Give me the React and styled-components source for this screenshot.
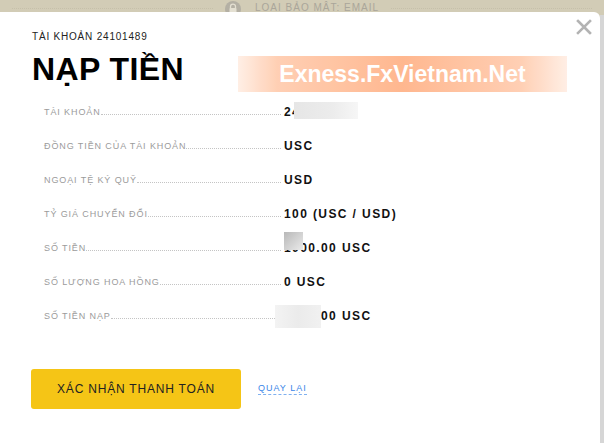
import styled, { createGlobalStyle } from "styled-components";

const GlobalStyle = createGlobalStyle`
  html, body {
    margin: 0;
    padding: 0;
    background: #d2ccb6;
    overflow: hidden;
    font-family: "Liberation Sans", Arial, sans-serif;
  }
`;

const rows = [
  { label: "Tài khoản", value: "24101489", redact: { left: 10, top: -3, width: 64, height: 17, tone: "light" } },
  { label: "Đồng tiền của tài khoản", value: "USC" },
  { label: "Ngoại tệ ký quỹ", value: "USD" },
  { label: "Tỷ giá chuyển đổi", value: "100 (USC / USD)" },
  { label: "Số tiền", value: "1000.00 USC", redact: { left: 0, top: -9, width: 19, height: 18, tone: "dark" } },
  { label: "Số lượng hoa hồng", value: "0 USC" },
  { label: "Số tiền nạp", value: "1000.00 USC", redact: { left: -9, top: -4, width: 46, height: 23, tone: "pale" } },
];

export default function App() {
  return (
    <>
      <GlobalStyle />
      <Page>
        <TopBar>
          <BarLeader />
          <LockIcon viewBox="0 0 16 16">
            <circle cx="8" cy="8" r="8" fill="#b4b0a4" />
            <path d="M5.5 7V5.6a2.5 2.5 0 0 1 5 0V7" fill="none" stroke="#e4e0d2" strokeWidth="1.3" />
            <rect x="4.5" y="7" width="7" height="5" rx="0.8" fill="#e4e0d2" />
          </LockIcon>
          <BarText>LOẠI BẢO MẬT: EMAIL</BarText>
          <BarLeader />
        </TopBar>
        <Body>
          <Modal>
            <CloseButton viewBox="0 0 16 16">
              <path d="M2 2L14 14M14 2L2 14" stroke="#b3b3b3" strokeWidth="2.6" strokeLinecap="square" />
            </CloseButton>
            <Watermark>Exness.FxVietnam.Net</Watermark>
            <Account>Tài khoản 24101489</Account>
            <Title>NẠP TIỀN</Title>
            <Details>
              {rows.map((r, i) => (
                <Row key={i}>
                  <LabelCell>
                    <Label>{r.label}</Label>
                    <Leader />
                  </LabelCell>
                  <Value>
                    {r.value}
                    {r.redact && (
                      <Redact
                        $left={r.redact.left}
                        $top={r.redact.top}
                        $width={r.redact.width}
                        $height={r.redact.height}
                        $tone={r.redact.tone}
                      />
                    )}
                  </Value>
                </Row>
              ))}
            </Details>
            <Actions>
              <ConfirmButton>Xác nhận thanh toán</ConfirmButton>
              <BackLink>Quay lại</BackLink>
            </Actions>
          </Modal>
          <Side />
        </Body>
      </Page>
    </>
  );
}

const Page = styled.div`
  display: flex;
  flex-direction: column;
  height: 100vh;
`;

const TopBar = styled.div`
  height: 12px;
  overflow: hidden;
  display: flex;
  align-items: flex-start;
  padding: 1px 0 0;
  box-sizing: border-box;
  gap: 0;
`;

const BarLeader = styled.span`
  flex: 1;
  height: 7px;
  border-bottom: 1px dotted #c6c0aa;
  margin: 0 12px;
`;

const LockIcon = styled.svg`
  width: 16px;
  height: 16px;
  flex: none;
`;

const BarText = styled.span`
  margin-left: 14px;
  font-size: 10px;
  line-height: 14px;
  letter-spacing: 1px;
  color: #aaa69a;
  white-space: nowrap;
`;

const Body = styled.div`
  flex: 1;
  display: flex;
`;

const Modal = styled.div`
  position: relative;
  width: 600px;
  box-sizing: border-box;
  background: #ffffff;
  border-top-right-radius: 6px;
  padding: 19px 0 0 32px;
`;

const Side = styled.div`
  flex: 1;
  background: #d6d6d6;
  margin-top: 3px;
`;

const CloseButton = styled.svg`
  position: absolute;
  top: 7px;
  right: 8px;
  width: 16px;
  height: 16px;
`;

const Watermark = styled.div`
  position: absolute;
  left: 238px;
  top: 44px;
  width: 329px;
  height: 36px;
  display: flex;
  align-items: center;
  justify-content: center;
  background: linear-gradient(
    90deg,
    #ffeee4 0%,
    #ffcdb0 12%,
    #ffb48a 50%,
    #ffcdb0 86%,
    #ffeee4 100%
  );
  color: #ffffff;
  font-size: 23px;
  font-weight: 700;
  opacity: 0.95;
`;

const Account = styled.div`
  font-size: 10px;
  line-height: 12px;
  letter-spacing: 0.8px;
  text-transform: uppercase;
  color: #222;
`;

const Title = styled.h1`
  margin: 10px 0 0;
  font-size: 32px;
  line-height: 32px;
  font-weight: 700;
  letter-spacing: 0.4px;
  color: #000;
`;

const Details = styled.div`
  margin: 10px 0 0 12px;
  display: flex;
  flex-direction: column;
`;

const Row = styled.div`
  height: 34px;
  display: flex;
  align-items: center;
`;

const LabelCell = styled.div`
  width: 237px;
  margin-right: 3px;
  display: flex;
  align-items: baseline;
`;

const Label = styled.span`
  font-size: 9px;
  line-height: 12px;
  letter-spacing: 0.9px;
  text-transform: uppercase;
  color: #9b9b9b;
  white-space: nowrap;
`;

const Leader = styled.span`
  flex: 1;
  height: 0;
  border-bottom: 1px dotted #c4c4c4;
`;

const Value = styled.span`
  position: relative;
  font-size: 12px;
  line-height: 14px;
  font-weight: 700;
  letter-spacing: 1.4px;
  color: #111;
  white-space: nowrap;
`;

const redactTones = {
  light: "linear-gradient(90deg, #e6e6e6 0%, #ececec 60%, #f6f6f6 100%)",
  dark: "linear-gradient(135deg, #b8b8b8 0%, #d6d6d6 60%, #ebebeb 100%)",
  pale: "linear-gradient(90deg, #f3f3f3 0%, #ebebeb 50%, #f1f1f1 100%)",
};

const Redact = styled.span`
  position: absolute;
  left: ${(p) => p.$left}px;
  top: ${(p) => p.$top}px;
  width: ${(p) => p.$width}px;
  height: ${(p) => p.$height}px;
  background: ${(p) => redactTones[p.$tone]};
`;

const Actions = styled.div`
  margin-top: 36px;
  margin-left: -1px;
  display: flex;
  align-items: center;
  gap: 17px;
`;

const ConfirmButton = styled.button`
  width: 210px;
  height: 40px;
  border: none;
  border-radius: 3px;
  background: #f5c516;
  font-family: "Liberation Sans", Arial, sans-serif;
  font-size: 12px;
  letter-spacing: 0.8px;
  text-transform: uppercase;
  color: #222;
  padding: 0;
`;

const BackLink = styled.a`
  font-size: 9px;
  line-height: 11px;
  letter-spacing: 1px;
  text-transform: uppercase;
  color: #3a86e8;
  border-bottom: 1px dashed #7fb0f0;
  cursor: pointer;
`;
